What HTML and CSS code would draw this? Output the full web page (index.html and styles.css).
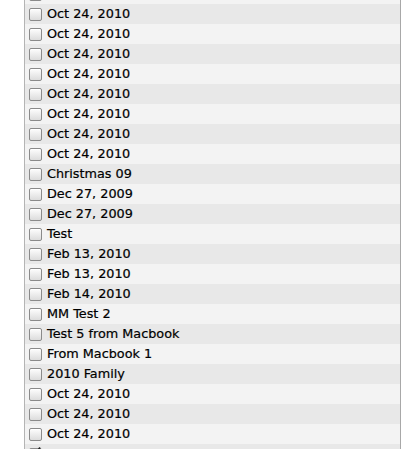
FILE: index.html
```html
<!DOCTYPE html>
<html>
<head>
<meta charset="utf-8">
<link rel="stylesheet" href="styles.css">
</head>
<body>
<div class="list">
  <div class="row"><span class="cb"></span><span class="label">Oct 24, 2010</span></div>
  <div class="row"><span class="cb"></span><span class="label">Oct 24, 2010</span></div>
  <div class="row"><span class="cb"></span><span class="label">Oct 24, 2010</span></div>
  <div class="row"><span class="cb"></span><span class="label">Oct 24, 2010</span></div>
  <div class="row"><span class="cb"></span><span class="label">Oct 24, 2010</span></div>
  <div class="row"><span class="cb"></span><span class="label">Oct 24, 2010</span></div>
  <div class="row"><span class="cb"></span><span class="label">Oct 24, 2010</span></div>
  <div class="row"><span class="cb"></span><span class="label">Oct 24, 2010</span></div>
  <div class="row"><span class="cb"></span><span class="label">Oct 24, 2010</span></div>
  <div class="row"><span class="cb"></span><span class="label">Christmas 09</span></div>
  <div class="row"><span class="cb"></span><span class="label">Dec 27, 2009</span></div>
  <div class="row"><span class="cb"></span><span class="label">Dec 27, 2009</span></div>
  <div class="row"><span class="cb"></span><span class="label">Test</span></div>
  <div class="row"><span class="cb"></span><span class="label">Feb 13, 2010</span></div>
  <div class="row"><span class="cb"></span><span class="label">Feb 13, 2010</span></div>
  <div class="row"><span class="cb"></span><span class="label">Feb 14, 2010</span></div>
  <div class="row"><span class="cb"></span><span class="label">MM Test 2</span></div>
  <div class="row"><span class="cb"></span><span class="label">Test 5 from Macbook</span></div>
  <div class="row"><span class="cb"></span><span class="label">From Macbook 1</span></div>
  <div class="row"><span class="cb"></span><span class="label">2010 Family</span></div>
  <div class="row"><span class="cb"></span><span class="label">Oct 24, 2010</span></div>
  <div class="row"><span class="cb"></span><span class="label">Oct 24, 2010</span></div>
  <div class="row"><span class="cb"></span><span class="label">Oct 24, 2010</span></div>
  <div class="row"><span class="cb checked"><svg viewBox="0 0 12 12" width="12" height="12"><path d="M2.5 6.5 L5 9 L10 1.5" fill="none" stroke="#222" stroke-width="1.8"/></svg></span><span class="label">Christmas 10</span></div>
</div>
</body>
</html>
```
FILE: styles.css
```css
html, body {
  margin: 0;
  padding: 0;
  background: #fff;
  overflow: hidden;
  height: 449px;
}
.list {
  margin-top: -16px;
  margin-left: 24px;
  width: 375px;
  border-left: 1px solid #b4b4b4;
  border-right: 1px solid #a8a8a8;
  font-family: "DejaVu Sans", "Lucida Grande", sans-serif;
  font-size: 12.8px;
  color: #000;
  -webkit-text-stroke: 0.2px #000;
}
.row {
  height: 20px;
  display: flex;
  align-items: center;
  padding-left: 4px;
  background: #f3f3f3;
}
.row:nth-child(even) {
  background: #e8e8e8;
}
.cb {
  width: 11px;
  height: 11px;
  border: 1px solid #8a8a8a;
  border-radius: 2px;
  background: linear-gradient(#fdfdfd, #dcdcdc);
  box-shadow: inset 0 1px 0 #fff;
  margin-right: 5px;
  flex: none;
  position: relative;
}
.cb svg {
  position: absolute;
  left: 0;
  top: -3px;
}
.label {
  line-height: 20px;
  white-space: nowrap;
}
```
